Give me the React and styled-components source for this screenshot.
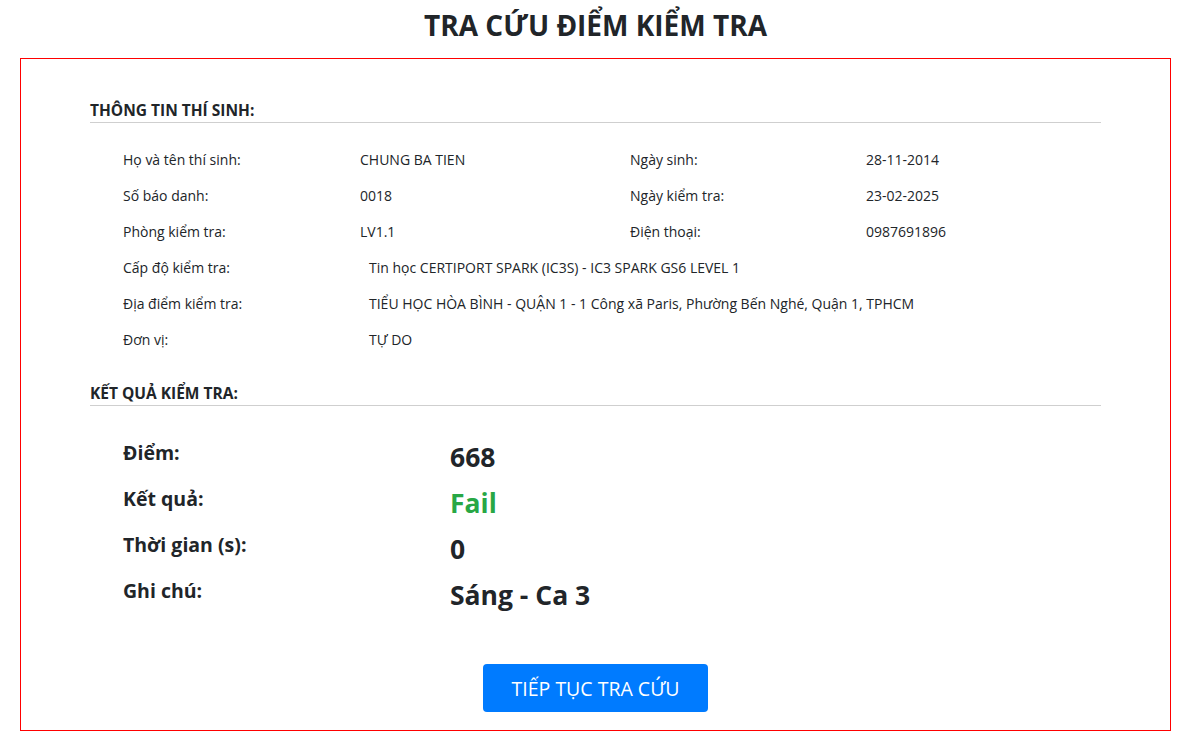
import React from 'react'
import styled, { createGlobalStyle } from 'styled-components'

const GlobalStyle = createGlobalStyle`
    body {
        margin: 0;
        background: #fff;
        font-family: "Open Sans", "Noto Sans", sans-serif;
        color: #212529;
    }
`

const Page = styled.div`
    padding: 0 20px 15px;
`

const Title = styled.h1`
    margin: 0;
    padding-top: 6px;
    height: 52px;
    text-align: center;
    font-size: 28px;
    font-weight: 700;
    line-height: 38px;
    color: #212529;
`

const Box = styled.div`
    border: 1px solid #ff0000;
    padding: 38px 69px 18px;
`

const SectionTitle = styled.h2`
    margin: 0;
    font-size: 15.5px;
    font-weight: 700;
    line-height: 20px;
    padding: 3px 0 2px;
    border-bottom: 1px solid #cfcfcf;
`

const InfoGrid = styled.div`
    display: grid;
    grid-template-columns: 237px 270px 236px 1fr;
    padding: 19px 0 22px 33px;
`

const WideRow = styled.div`
    grid-column: 1 / 5;
    display: grid;
    grid-template-columns: 246px 1fr;
`

const Cell = styled.div`
    font-size: 14px;
    line-height: 36px;
    white-space: nowrap;
`

const ResultGrid = styled.div`
    display: grid;
    grid-template-columns: 327px 1fr;
    padding: 28px 0 0 33px;
`

const ResultLabel = styled.div`
    font-size: 19.5px;
    font-weight: 700;
    line-height: 46px;
    height: 46px;
    transform: translateY(-4px);
`

const ResultValue = styled.div`
    font-size: 26.5px;
    font-weight: 700;
    line-height: 46px;
    height: 46px;
    color: ${props => props.color || '#212529'};
`

const ButtonRow = styled.div`
    display: flex;
    justify-content: center;
    padding-top: 46px;
`

const Button = styled.button`
    width: 225px;
    height: 48px;
    border: none;
    border-radius: 4px;
    background: #007bff;
    color: #fff;
    font-family: inherit;
    font-size: 19.5px;
    cursor: pointer;
`

const info = [
    ['Họ và tên thí sinh:', 'CHUNG BA TIEN', 'Ngày sinh:', '28-11-2014'],
    ['Số báo danh:', '0018', 'Ngày kiểm tra:', '23-02-2025'],
    ['Phòng kiểm tra:', 'LV1.1', 'Điện thoại:', '0987691896'],
]

const wide = [
    ['Cấp độ kiểm tra:', 'Tin học CERTIPORT SPARK (IC3S) - IC3 SPARK GS6 LEVEL 1'],
    ['Địa điểm kiểm tra:', 'TIỂU HỌC HÒA BÌNH - QUẬN 1 - 1 Công xã Paris, Phường Bến Nghé, Quận 1, TPHCM'],
    ['Đơn vị:', 'TỰ DO'],
]

const results = [
    ['Điểm:', '668'],
    ['Kết quả:', 'Fail', '#28a745'],
    ['Thời gian (s):', '0'],
    ['Ghi chú:', 'Sáng - Ca 3'],
]

const App = () => (
    <Page>
        <GlobalStyle />
        <Title>TRA CỨU ĐIỂM KIỂM TRA</Title>
        <Box>
            <SectionTitle>THÔNG TIN THÍ SINH:</SectionTitle>
            <InfoGrid>
                {info.map(row => row.map((text, i) => <Cell key={row[0] + i}>{text}</Cell>))}
                {wide.map(([label, value]) => (
                    <WideRow key={label}>
                        <Cell>{label}</Cell>
                        <Cell>{value}</Cell>
                    </WideRow>
                ))}
            </InfoGrid>
            <SectionTitle>KẾT QUẢ KIỂM TRA:</SectionTitle>
            <ResultGrid>
                {results.map(([label, value, color]) => (
                    <React.Fragment key={label}>
                        <ResultLabel>{label}</ResultLabel>
                        <ResultValue color={color}>{value}</ResultValue>
                    </React.Fragment>
                ))}
            </ResultGrid>
            <ButtonRow>
                <Button>TIẾP TỤC TRA CỨU</Button>
            </ButtonRow>
        </Box>
    </Page>
)

export default App
